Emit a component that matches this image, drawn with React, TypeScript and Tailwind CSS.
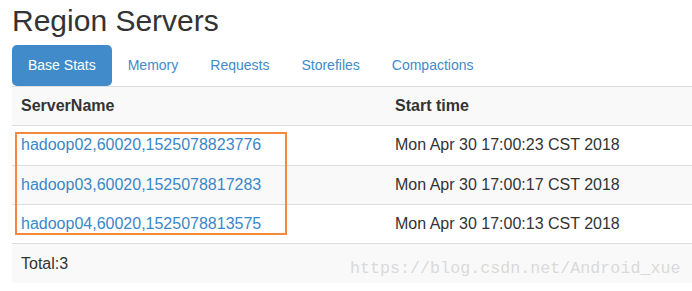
import React from 'react';

interface ServerRow {
  name: string;
  start: string;
}

const tabs = ['Base Stats', 'Memory', 'Requests', 'Storefiles', 'Compactions'];

const servers: ServerRow[] = [
  { name: 'hadoop02,60020,1525078823776', start: 'Mon Apr 30 17:00:23 CST 2018' },
  { name: 'hadoop03,60020,1525078817283', start: 'Mon Apr 30 17:00:17 CST 2018' },
  { name: 'hadoop04,60020,1525078813575', start: 'Mon Apr 30 17:00:13 CST 2018' },
];

export default function App() {
  return (
    <div
      className="w-[692px] h-[291px] bg-white overflow-hidden pl-3 text-[#333]"
      style={{ fontFamily: '"Liberation Sans", Arial, sans-serif' }}
    >
      <h1 className="mt-[3px] text-[30px] leading-[36px] font-normal text-[#333]">Region Servers</h1>

      {/* tabs */}
      <ul className="mt-[6px] flex h-[41px] text-[14px]">
        {tabs.map((t, i) => (
          <li
            key={t}
            className={`flex items-center px-4 rounded-[5px] ${
              i === 0 ? 'bg-[#428bca] text-white' : 'text-[#428bca]'
            }`}
          >
            {t}
          </li>
        ))}
      </ul>

      {/* table */}
      <div className="relative text-[16px]">
        <div className="grid grid-cols-[374px_1fr] h-[39.3px] items-center border-t border-[#ddd] bg-[#f9f9f9] font-bold">
          <div className="pl-[9px]">ServerName</div>
          <div className="pl-[9px]">Start time</div>
        </div>
        {servers.map((s, i) => (
          <div
            key={s.name}
            className={`grid grid-cols-[374px_1fr] h-[39.3px] items-center border-t border-[#ddd] ${
              i === 1 ? 'bg-[#f9f9f9]' : 'bg-white'
            }`}
          >
            <div className="pl-[9px] text-[#3a87c9]">{s.name}</div>
            <div className="pl-[9px]">{s.start}</div>
          </div>
        ))}
        <div className="h-[40px] flex items-center border-t border-[#ddd] bg-[#f9f9f9] pl-[9px]">Total:3</div>

        {/* highlight box */}
        <div className="absolute left-[3px] top-[46px] w-[272px] h-[103px] border-2 border-[#f5883c]" />

        {/* watermark */}
        <div
          className="absolute left-[338px] top-[173px] text-[16.7px] leading-[20px] text-[#dadada]"
          style={{ fontFamily: '"Liberation Mono", "Courier New", monospace' }}
        >
          https://blog.csdn.net/Android_xue
        </div>
      </div>
    </div>
  );
}
